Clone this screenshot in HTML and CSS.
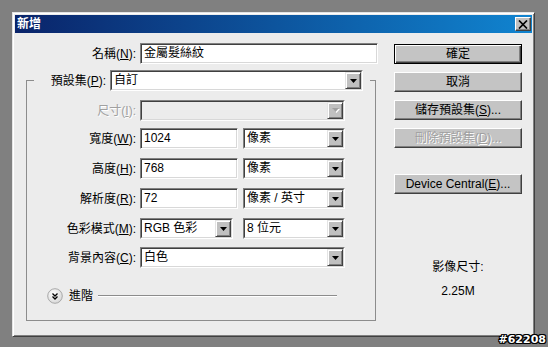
FILE: index.html
```html
<!DOCTYPE html>
<html lang="zh-Hant">
<head>
<meta charset="utf-8">
<title>新增</title>
<link rel="stylesheet" href="styles.css">
</head>
<body>
<div class="dialog">
  <div class="titlebar">
    <span class="title">新增</span>
    <button class="close" type="button" aria-label="關閉">
      <svg width="10" height="9" viewBox="0 0 10 9"><path d="M1 0.5 L9 8.5 M9 0.5 L1 8.5" stroke="#000" stroke-width="1.7" fill="none"/></svg>
    </button>
  </div>
  <div class="main">
    <div class="form">
      <div class="row name-row">
        <span class="lbl lbl-out">名稱(<u>N</u>):</span>
        <div class="field w-name">金屬髮絲紋</div>
      </div>
      <fieldset class="group">
        <legend class="legend">
          <span class="legend-in">
            <span class="lbl lbl-preset">預設集(<u>P</u>):</span>
            <span class="combo w-preset"><span class="ci"><span class="val">自訂</span><span class="drop"><svg width="7" height="4" viewBox="0 0 7 4"><path d="M0 0H7L3.5 4Z" fill="#000"/></svg></span></span></span>
          </span>
        </legend>
        <div class="row">
          <span class="lbl lbl-in disabled">尺寸(<u>I</u>):</span>
          <span class="combo w-full off"><span class="ci"><span class="val"></span><span class="drop"><svg width="8" height="5" viewBox="0 0 8 5"><path d="M1 1H8L4.5 5Z" fill="#fff"/><path d="M0 0H7L3.5 4Z" fill="#a0a0a0"/></svg></span></span></span>
        </div>
        <div class="row r-w">
          <span class="lbl lbl-in">寬度(<u>W</u>):</span>
          <div class="field w-num">1024</div>
          <span class="combo w-unit"><span class="ci"><span class="val">像素</span><span class="drop"><svg width="7" height="4" viewBox="0 0 7 4"><path d="M0 0H7L3.5 4Z" fill="#000"/></svg></span></span></span>
        </div>
        <div class="row r-9">
          <span class="lbl lbl-in">高度(<u>H</u>):</span>
          <div class="field w-num">768</div>
          <span class="combo w-unit"><span class="ci"><span class="val">像素</span><span class="drop"><svg width="7" height="4" viewBox="0 0 7 4"><path d="M0 0H7L3.5 4Z" fill="#000"/></svg></span></span></span>
        </div>
        <div class="row r-9">
          <span class="lbl lbl-in">解析度(<u>R</u>):</span>
          <div class="field w-num">72</div>
          <span class="combo w-unit"><span class="ci"><span class="val">像素 / 英寸</span><span class="drop"><svg width="7" height="4" viewBox="0 0 7 4"><path d="M0 0H7L3.5 4Z" fill="#000"/></svg></span></span></span>
        </div>
        <div class="row r-9">
          <span class="lbl lbl-in">色彩模式(<u>M</u>):</span>
          <span class="combo w-mode"><span class="ci"><span class="val">RGB 色彩</span><span class="drop"><svg width="7" height="4" viewBox="0 0 7 4"><path d="M0 0H7L3.5 4Z" fill="#000"/></svg></span></span></span>
          <span class="combo w-unit gap-mode"><span class="ci"><span class="val">8 位元</span><span class="drop"><svg width="7" height="4" viewBox="0 0 7 4"><path d="M0 0H7L3.5 4Z" fill="#000"/></svg></span></span></span>
        </div>
        <div class="row r-8">
          <span class="lbl lbl-in">背景內容(<u>C</u>):</span>
          <span class="combo w-full"><span class="ci"><span class="val">白色</span><span class="drop"><svg width="7" height="4" viewBox="0 0 7 4"><path d="M0 0H7L3.5 4Z" fill="#000"/></svg></span></span></span>
        </div>
        <div class="adv">
          <span class="adv-icon">
            <svg width="16" height="16" viewBox="0 0 16 16">
              <defs><radialGradient id="g" cx="0.4" cy="0.35" r="0.7"><stop offset="0" stop-color="#ffffff"/><stop offset="1" stop-color="#d6d6d6"/></radialGradient></defs>
              <circle cx="8" cy="8" r="7.3" fill="url(#g)" stroke="#a9a9a9" stroke-width="1"/>
              <path d="M5.5 5.5 L8 8 L10.5 5.5 M5.5 8.5 L8 11 L10.5 8.5" stroke="#000" stroke-width="1.3" fill="none"/>
            </svg>
          </span>
          <span class="adv-text">進階</span>
          <span class="adv-line"></span>
        </div>
      </fieldset>
    </div>
    <div class="side">
      <button class="btn default" type="button">確定</button>
      <button class="btn" type="button">取消</button>
      <button class="btn" type="button">儲存預設集(<u>S</u>)...</button>
      <button class="btn btn-off" type="button">刪除預設集(<u>D</u>)...</button>
      <button class="btn device" type="button">Device Central(<u>E</u>)...</button>
      <div class="info">
        <div class="info-label">影像尺寸:</div>
        <div class="info-size">2.25M</div>
      </div>
    </div>
  </div>
</div>
<div class="badge">#62208</div>
</body>
</html>
```

FILE: styles.css
```css
* { box-sizing: border-box; }
html, body { margin: 0; padding: 0; }
body {
  background: #808080;
  width: 548px;
  height: 347px;
  overflow: hidden;
  position: relative;
  font-family: "Liberation Sans", "Noto Sans CJK TC", sans-serif;
  font-size: 12px;
  color: #000;
}
u { text-decoration: underline; text-underline-offset: 1px; }

.dialog {
  margin: 12px 0 0 12px;
  width: 523px;
  height: 325px;
  background: #ececec;
  border: 1px solid;
  border-color: #e4e4e4 #404040 #404040 #e4e4e4;
  box-shadow: inset 1px 1px 0 #fff, inset -1px -1px 0 #808080;
  padding: 2px;
}

.titlebar {
  height: 18px;
  display: flex;
  align-items: center;
  justify-content: space-between;
  background: linear-gradient(to right, #0a246a, #1084d0);
  padding-left: 2px;
}
.title { color: #fff; font-weight: bold; line-height: 18px; }
.close {
  width: 16px;
  height: 14px;
  margin-right: 1px;
  padding: 0;
  background: #c0c0c0;
  border: 1px solid;
  border-color: #fff #404040 #404040 #fff;
  box-shadow: inset -1px -1px 0 #808080;
  display: flex;
  align-items: center;
  justify-content: center;
}

.main { display: flex; }
.form { width: 379px; }

.row { display: flex; align-items: center; height: 21px; }
.name-row { margin-top: 10px; }
.r-w { margin-top: 7px; }
.r-9 { margin-top: 9px; }
.r-8 { margin-top: 8px; }

.lbl { white-space: nowrap; text-align: right; margin-right: 4px; line-height: 16px; }
.lbl-out { width: 121px; }
.lbl-in { width: 109px; }
.lbl-preset { width: 57px; }
.disabled { color: #a0a0a0; text-shadow: 1px 1px 0 #fff; }

.field {
  height: 21px;
  background: #fff;
  border: 1px solid;
  border-color: #808080 #fff #fff #808080;
  box-shadow: inset 1px 1px 0 #404040, inset -1px -1px 0 #d8d8d8;
  padding-left: 3px;
  line-height: 19px;
  white-space: nowrap;
}
.w-name { width: 238px; }
.w-num { width: 98px; margin-right: 5px; }

.combo {
  display: block;
  height: 21px;
  background: #fff;
  border: 1px solid;
  border-color: #808080 #fff #fff #808080;
}
.combo.off { background: #ececec; }
.ci {
  display: flex;
  height: 100%;
  border: 1px solid;
  border-color: #404040 #d8d8d8 #d8d8d8 #404040;
}
.val { flex: 1; padding-left: 2px; line-height: 17px; white-space: nowrap; overflow: hidden; }
.drop {
  width: 16px;
  background: #c0c0c0;
  border: 1px solid;
  border-color: #e4e4e4 #404040 #404040 #e4e4e4;
  box-shadow: inset 1px 1px 0 #fff, inset -1px -1px 0 #808080;
  display: flex;
  align-items: center;
  justify-content: center;
}
.drop svg { display: block; margin-left: 1px; }
.w-preset { width: 253px; }
.w-full { width: 205px; }
.w-unit { width: 102px; }
.w-mode { width: 93px; }
.gap-mode { margin-left: 10px; }

.group {
  margin: 6px 0 0 11px;
  padding: 9px 0 16px 0;
  width: 350px;
  min-width: 0;
  border: 1px solid #8c8c8c;
}
.legend {
  margin-left: 7px;
  padding: 0 7px 0 15px;
  background: #ececec;
}
.legend-in { display: flex; align-items: center; height: 21px; }

.adv { display: flex; align-items: center; height: 16px; margin: 20px 0 0 20px; }
.adv-icon { width: 16px; height: 16px; }
.adv-icon svg { display: block; }
.adv-text { margin-left: 6px; line-height: 16px; }
.adv-line {
  width: 239px;
  margin-left: 5px;
  border-top: 1px solid #8c8c8c;
  border-bottom: 1px solid #fff;
  height: 2px;
}

.side { width: 128px; margin-top: 11px; display: flex; flex-direction: column; }
.btn {
  width: 128px;
  height: 20px;
  padding: 0;
  background: #c4c4c4;
  border: 1px solid;
  border-color: #fff #404040 #404040 #fff;
  box-shadow: inset -1px -1px 0 #808080;
  font: inherit;
  color: #000;
  line-height: 17px;
  text-align: center;
  white-space: nowrap;
}
.btn + .btn { margin-top: 8px; }
.btn.default {
  border-color: #000;
  box-shadow: inset 1px 1px 0 #fff, inset -1px -1px 0 #404040, inset -2px -2px 0 #808080;
}
.btn.btn-off { color: #a0a0a0; text-shadow: 1px 1px 0 #fff; }
.btn.device { margin-top: 26px; }

.info { margin-top: 65px; text-align: center; line-height: 16px; }
.info-size { margin-top: 8px; }

.badge {
  position: absolute;
  right: 2px;
  bottom: 1px;
  font-family: "DejaVu Sans", sans-serif;
  font-weight: bold;
  font-size: 11px;
  line-height: 12px;
  color: #fff;
  text-shadow: 1px 0 0 #000, -1px 0 0 #000, 0 1px 0 #000, 0 -1px 0 #000, 1px 1px 0 #000, -1px -1px 0 #000, 1px -1px 0 #000, -1px 1px 0 #000;
}
```
